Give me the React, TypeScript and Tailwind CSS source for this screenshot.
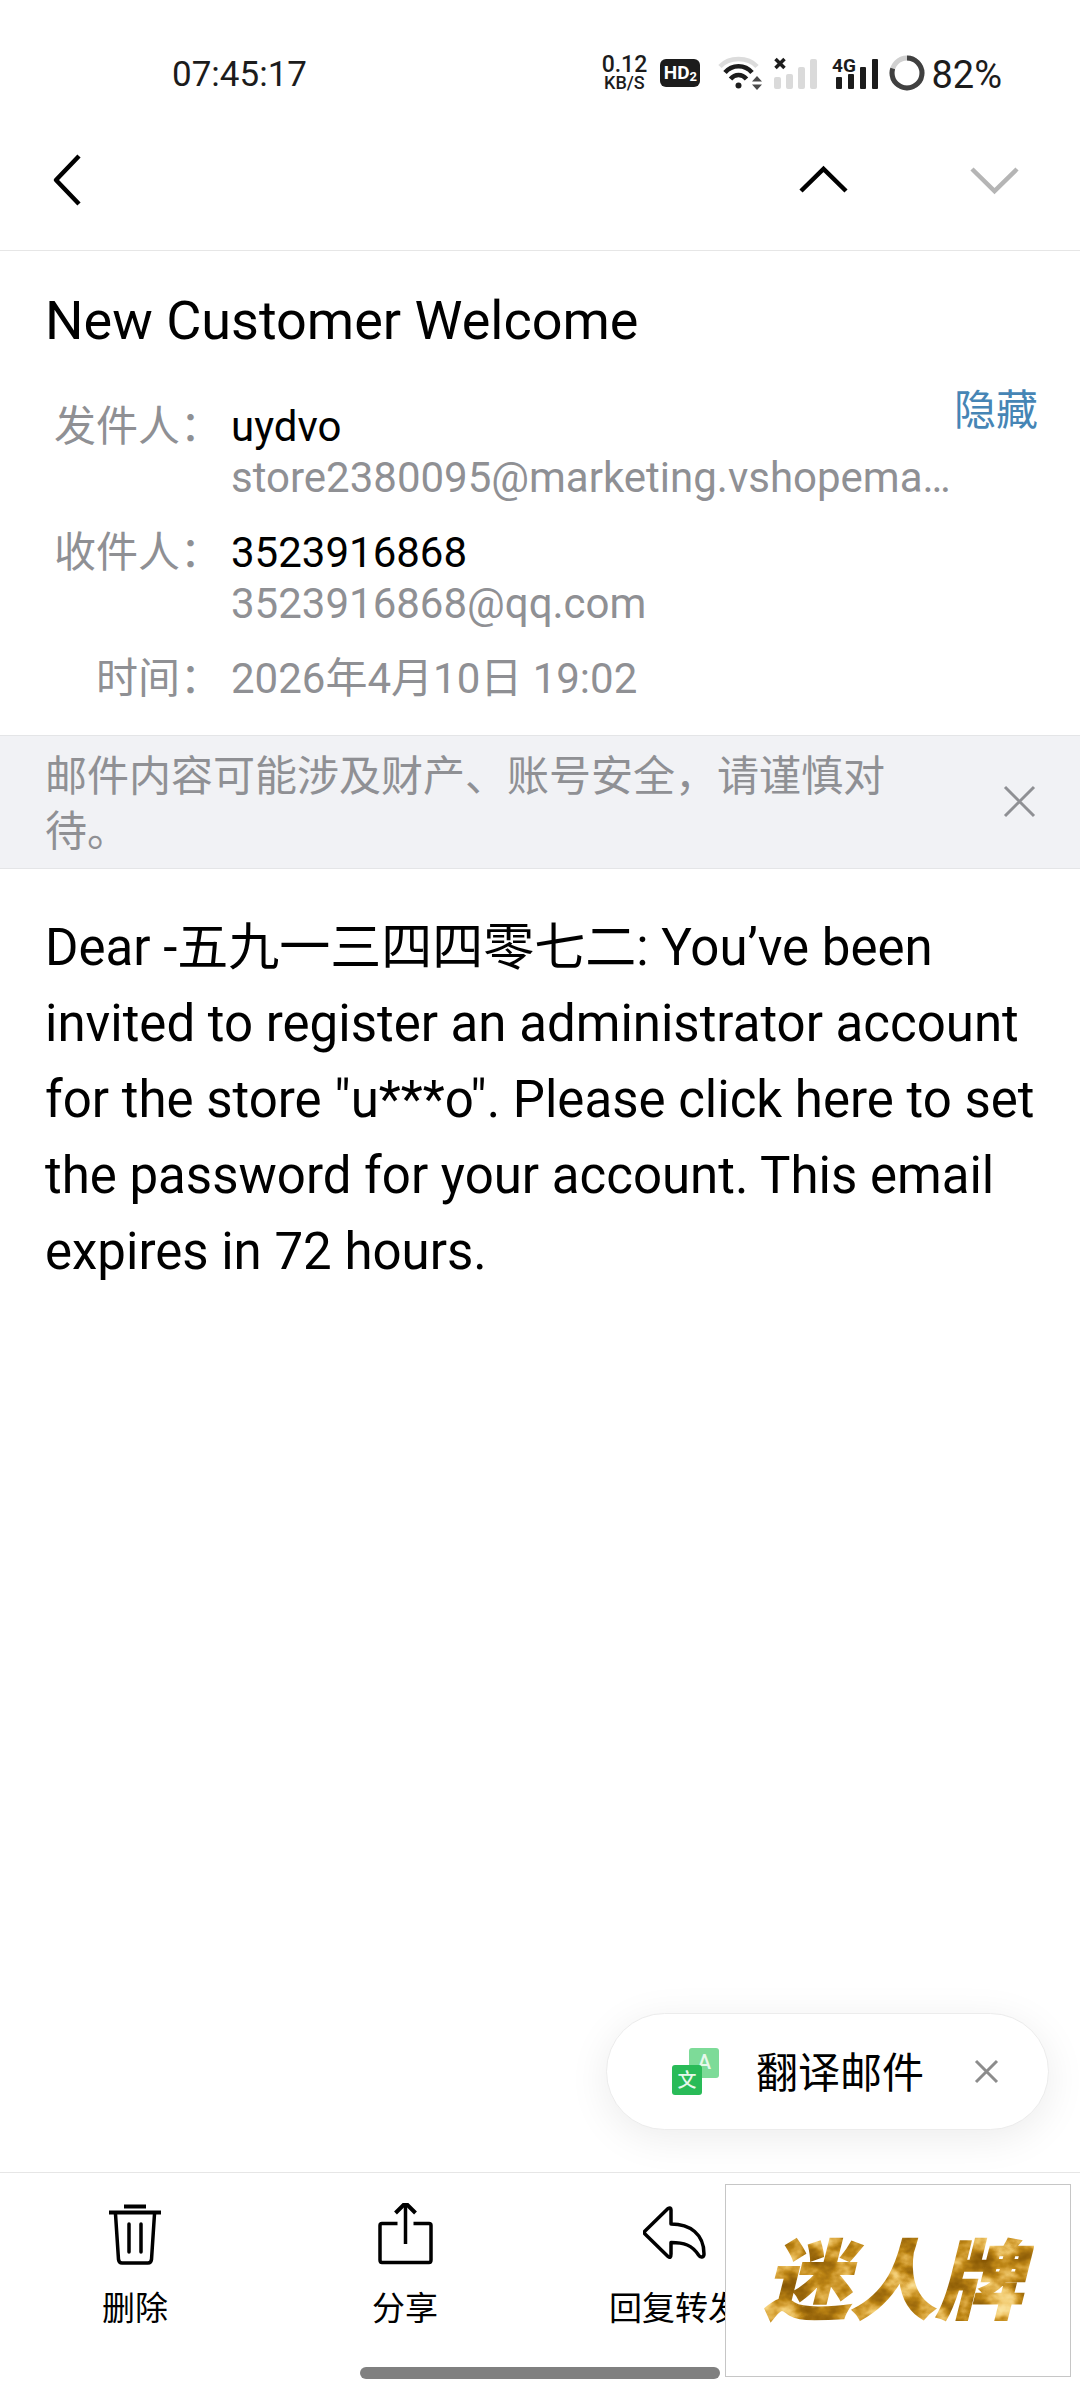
import { useState } from 'react';

interface MailParty {
  label: string;
  name: string;
  address: string;
}

const parties: MailParty[] = [
  { label: '发件人：', name: 'uydvo', address: 'store2380095@marketing.vshopema…' },
  { label: '收件人：', name: '3523916868', address: '3523916868@qq.com' },
];

function StatusBar() {
  return (
    <div className="flex h-[110px] items-center justify-between pt-9 pr-[78px] pl-[172px] text-[#1c1c1c]">
      <span className="pt-1 text-[35px] leading-10">07:45:17</span>
      <div className="flex items-center">
        <div className="flex w-12 flex-col items-center font-medium">
          <span className="text-[23px] leading-5">0.12</span>
          <span className="text-[18px] leading-4">KB/S</span>
        </div>
        <div className="ml-3 flex h-7 w-10 items-center justify-center rounded-md bg-[#1c1c1c] font-bold text-white">
          <span className="text-[19px] leading-7">HD</span>
          <span className="pt-2 text-[13px] leading-5">2</span>
        </div>
        <svg className="ml-[18px] h-9 w-11" viewBox="0 0 44 36" fill="none">
          <path d="M2 11.5C11 1.500 30 1.500 39 11.500" stroke="#dcdcdc" strokeWidth="4.500" />
          <path d="M7 17.500C14 9 27 9 34 17.500" stroke="#1c1c1c" strokeWidth="4.500" />
          <path d="M12.500 24C17 18.500 24 18.500 28.500 24" stroke="#1c1c1c" strokeWidth="4.500" />
          <circle cx="20.500" cy="30.500" r="3" fill="#1c1c1c" />
          <path d="M34 26.500L39 21L44 26.500ZM34 29.500L39 35L44 29.500Z" fill="#4a4a4a" />
        </svg>
        <svg className="ml-3 h-9 w-11" viewBox="0 0 44 36" fill="none">
          <path d="M1.500 4L10.500 13M10.500 4L1.500 13" stroke="#1c1c1c" strokeWidth="3.500" />
          <g fill="#dadada">
            <rect x="0" y="22" width="7" height="12" rx="2" />
            <rect x="12" y="19" width="7" height="15" rx="2" />
            <rect x="24" y="12" width="7" height="22" rx="2" />
            <rect x="36" y="4" width="7" height="30" rx="2" />
          </g>
        </svg>
        <svg className="ml-[14px] h-9 w-12" viewBox="0 0 48 36" fill="none">
          <text x="0" y="17" fill="#1c1c1c" fontSize="19" fontWeight="700">
            4G
          </text>
          <g fill="#1c1c1c">
            <rect x="4" y="22" width="6" height="12" rx="1" />
            <rect x="16" y="19" width="6" height="15" rx="1" />
            <rect x="28" y="12" width="6" height="22" rx="1" />
            <rect x="40" y="4" width="6" height="30" rx="1" />
          </g>
        </svg>
        <svg className="ml-[9px] h-9 w-9" viewBox="0 0 36 36" fill="none">
          <circle cx="18" cy="18" r="15" stroke="#d0d0d0" strokeWidth="5" />
          <circle
            cx="18"
            cy="18"
            r="15"
            stroke="#404040"
            strokeWidth="5"
            pathLength="100"
            strokeDasharray="80 20"
            transform="rotate(-90 18 18)"
          />
        </svg>
        <span className="ml-[6px] pt-1 text-[38px] leading-10">82%</span>
      </div>
    </div>
  );
}

function NavBar() {
  return (
    <nav className="flex h-[141px] items-center justify-between border-b border-[#e6e6e6] pr-[60px] pl-[46px]">
      <button aria-label="返回">
        <svg className="h-[52px] w-10" viewBox="0 0 40 52" fill="none" stroke="#000" strokeWidth="4.500">
          <path d="M33 2L10 26L33 50" strokeLinejoin="round" />
        </svg>
      </button>
      <div className="flex gap-[119px]">
        <button aria-label="上一封">
          <svg className="h-[52px] w-[52px]" viewBox="0 0 52 52" fill="none" stroke="#000" strokeWidth="4.500">
            <path d="M4 37L26.500 15L49 37" />
          </svg>
        </button>
        <button aria-label="下一封" disabled>
          <svg className="h-[52px] w-[52px]" viewBox="0 0 52 52" fill="none" stroke="#b5b5b5" strokeWidth="4.500">
            <path d="M4 15L26.500 37L49 15" />
          </svg>
        </button>
      </div>
    </nav>
  );
}

function MailHeader() {
  return (
    <header className="pt-[38px] pb-[31px] pl-[45px]">
      <h1 className="text-[54px] leading-[64px]">New Customer Welcome</h1>
      <div className="mt-8 flex items-start pr-[42px]">
        <dl className="flex min-w-0 flex-1 flex-col gap-6 pt-4 text-[42px] leading-[51px] text-[#8f9094]">
          {parties.map((party) => (
            <div key={party.label} className="flex">
              <dt className="w-[177px] shrink-0 text-right">{party.label}</dt>
              <dd className="ml-[9px] min-w-0 flex-1">
                <p className="text-black">{party.name}</p>
                <p className="whitespace-nowrap">{party.address}</p>
              </dd>
            </div>
          ))}
          <div className="flex">
            <dt className="w-[177px] shrink-0 text-right">时间：</dt>
            <dd className="ml-[9px]">2026年4月10日 19:02</dd>
          </div>
        </dl>
        <button className="shrink-0 text-[42px] leading-[51px] text-[#4685b5]">隐藏</button>
      </div>
    </header>
  );
}

function SafetyNotice({ onClose }: { onClose: () => void }) {
  return (
    <div className="flex items-center justify-between border-y border-[#e4e5e7] bg-[#f1f2f5] pr-10 pl-[45px]">
      <p className="max-w-[860px] pt-[13px] pb-[9px] text-[42px] leading-[55px] text-[#8f9094]">
        邮件内容可能涉及财产、账号安全，请谨慎对待。
      </p>
      <button aria-label="关闭提示" onClick={onClose}>
        <svg className="h-10 w-10" viewBox="0 0 40 40" fill="none" stroke="#8f9094" strokeWidth="3">
          <path d="M5 5L34 34M34 5L5 34" />
        </svg>
      </button>
    </div>
  );
}

function TranslatePill({ onClose }: { onClose: () => void }) {
  return (
    <div className="absolute right-[31px] bottom-[270px] flex h-[117px] w-[443px] items-center rounded-full border border-[#ececec] bg-white pl-[65px] shadow-[0_8px_40px_rgba(0,0,0,0.08)]">
      <button className="flex items-center text-[42px] leading-[56px]">
        <svg className="mr-9 h-12 w-12" viewBox="0 0 48 48">
          <rect x="17" y="0" width="30" height="30" rx="3" fill="#7ddb98" />
          <text x="32.500" y="21" textAnchor="middle" fill="#e6f8eb" fontSize="20" fontWeight="500">
            A
          </text>
          <rect x="0" y="17" width="30" height="30" rx="3" fill="#29bb58" />
          <text x="15" y="39" textAnchor="middle" fill="#e6f8eb" fontSize="19" fontWeight="500">
            文
          </text>
        </svg>
        <span className="pt-1">翻译邮件</span>
      </button>
      <button aria-label="关闭翻译" className="ml-[46px]" onClick={onClose}>
        <svg className="h-8 w-8" viewBox="0 0 32 32" fill="none" stroke="#8c8c8c" strokeWidth="3">
          <path d="M6 5L27 26M27 5L6 26" />
        </svg>
      </button>
    </div>
  );
}

function TrashIcon() {
  return (
    <svg className="h-16 w-16" viewBox="0 0 64 64" fill="none" stroke="#000" strokeWidth="3.500">
      <path d="M21 3.500H43M6 9.500H58" strokeWidth="4" />
      <path d="M12.500 11L15.500 56.500Q16 60 19 60H45Q48 60 48.500 56.500L51.500 11" />
      <path d="M26 21V49M38 21V49" strokeLinecap="round" />
    </svg>
  );
}

function ShareIcon() {
  return (
    <svg className="h-16 w-16" viewBox="0 0 64 64" fill="none" stroke="#000" strokeWidth="3.500">
      <path d="M24.500 20.500H9Q7 20.500 7 22.500V57Q7 59.500 9 59.500H56Q58 59.500 58 57V22.500Q58 20.500 56 20.500H40.500" />
      <path d="M32.500 41V1" />
      <path d="M22.500 10L32.500 0L42.500 10" strokeWidth="4" />
    </svg>
  );
}

function ReplyIcon() {
  return (
    <svg className="h-16 w-16" viewBox="0 0 64 64" fill="none" stroke="#000" strokeWidth="3.500" strokeLinejoin="round">
      <path d="M2 28L25 5.500Q28 4 28 7V21C47 21 61 31 61 51C61 54.500 57.500 55 55.500 52C49 42 41 39.500 28 39.500V51Q28 56 25 53.500L2 31Q0.500 29.500 2 28Z" />
    </svg>
  );
}

const actions = [
  { label: '删除', icon: TrashIcon },
  { label: '分享', icon: ShareIcon },
  { label: '回复转发', icon: ReplyIcon },
];

function BottomBar() {
  return (
    <footer className="border-t border-[#e6e6e6] bg-white pb-[21px]">
      <div className="grid grid-cols-4 pt-[30px]">
        {actions.map(({ label, icon: Icon }) => (
          <button key={label} className="flex flex-col items-center gap-[18px]">
            <Icon />
            <span className="text-[33px] leading-[48px] whitespace-nowrap">{label}</span>
          </button>
        ))}
      </div>
      <div className="mx-auto mt-[34px] h-3 w-1/3 rounded-full bg-[#808080]" />
    </footer>
  );
}

// Gold foil lettering: noise mapped onto a brown-to-yellow ramp, clipped to the text
function BrandMark() {
  return (
    <svg className="h-[110px] w-[290px]" viewBox="0 0 290 110">
      <defs>
        <filter id="foil" x="0" y="0" width="100%" height="100%" colorInterpolationFilters="sRGB">
          <feTurbulence type="fractalNoise" baseFrequency="0.03 0.04" numOctaves="4" seed="7" />
          <feColorMatrix values="1.3 0 0 0 -0.2  1.3 0 0 0 -0.2  1.3 0 0 0 -0.2  0 0 0 0 1" />
          <feComponentTransfer result="gold">
            <feFuncR type="table" tableValues="0.5 0.55 0.62 0.74 0.86 0.95 0.98 1" />
            <feFuncG type="table" tableValues="0.3 0.36 0.42 0.52 0.66 0.8 0.88 0.95" />
            <feFuncB type="table" tableValues="0 0.02 0.05 0.08 0.25 0.45 0.6 0.7" />
          </feComponentTransfer>
          <feComposite in="gold" in2="SourceGraphic" operator="in" />
        </filter>
      </defs>
      <text
        x="140"
        y="86"
        textAnchor="middle"
        fontSize="86"
        fontWeight="900"
        fontStyle="italic"
        stroke="#000"
        strokeWidth="1.500"
        filter="url(#foil)"
      >
        迷人牌
      </text>
    </svg>
  );
}

export default function App() {
  const [showNotice, setShowNotice] = useState(true);
  const [showTranslate, setShowTranslate] = useState(true);

  return (
    <div
      lang="zh-CN"
      className="relative flex min-h-screen flex-col overflow-hidden bg-white font-['Roboto','Noto_Sans_CJK_SC',sans-serif] text-black"
    >
      <StatusBar />
      <NavBar />
      <MailHeader />
      {showNotice && <SafetyNotice onClose={() => setShowNotice(false)} />}

      {/* Mail body */}
      <main className="flex-1 pt-[41px] pr-10 pl-[45px] text-[51px] leading-[76px]">
        <p>
          Dear -五九一三四四零七二: You’ve been invited to register an administrator account for the
          store "u***o". Please click here to set the password for your account. This email expires in
          72 hours.
        </p>
      </main>

      {showTranslate && <TranslatePill onClose={() => setShowTranslate(false)} />}
      <BottomBar />

      {/* Brand badge */}
      <div className="absolute right-[9px] bottom-[23px] flex h-[193px] w-[346px] items-center justify-center border border-[#c6c6c6] bg-white">
        <BrandMark />
      </div>
    </div>
  );
}
